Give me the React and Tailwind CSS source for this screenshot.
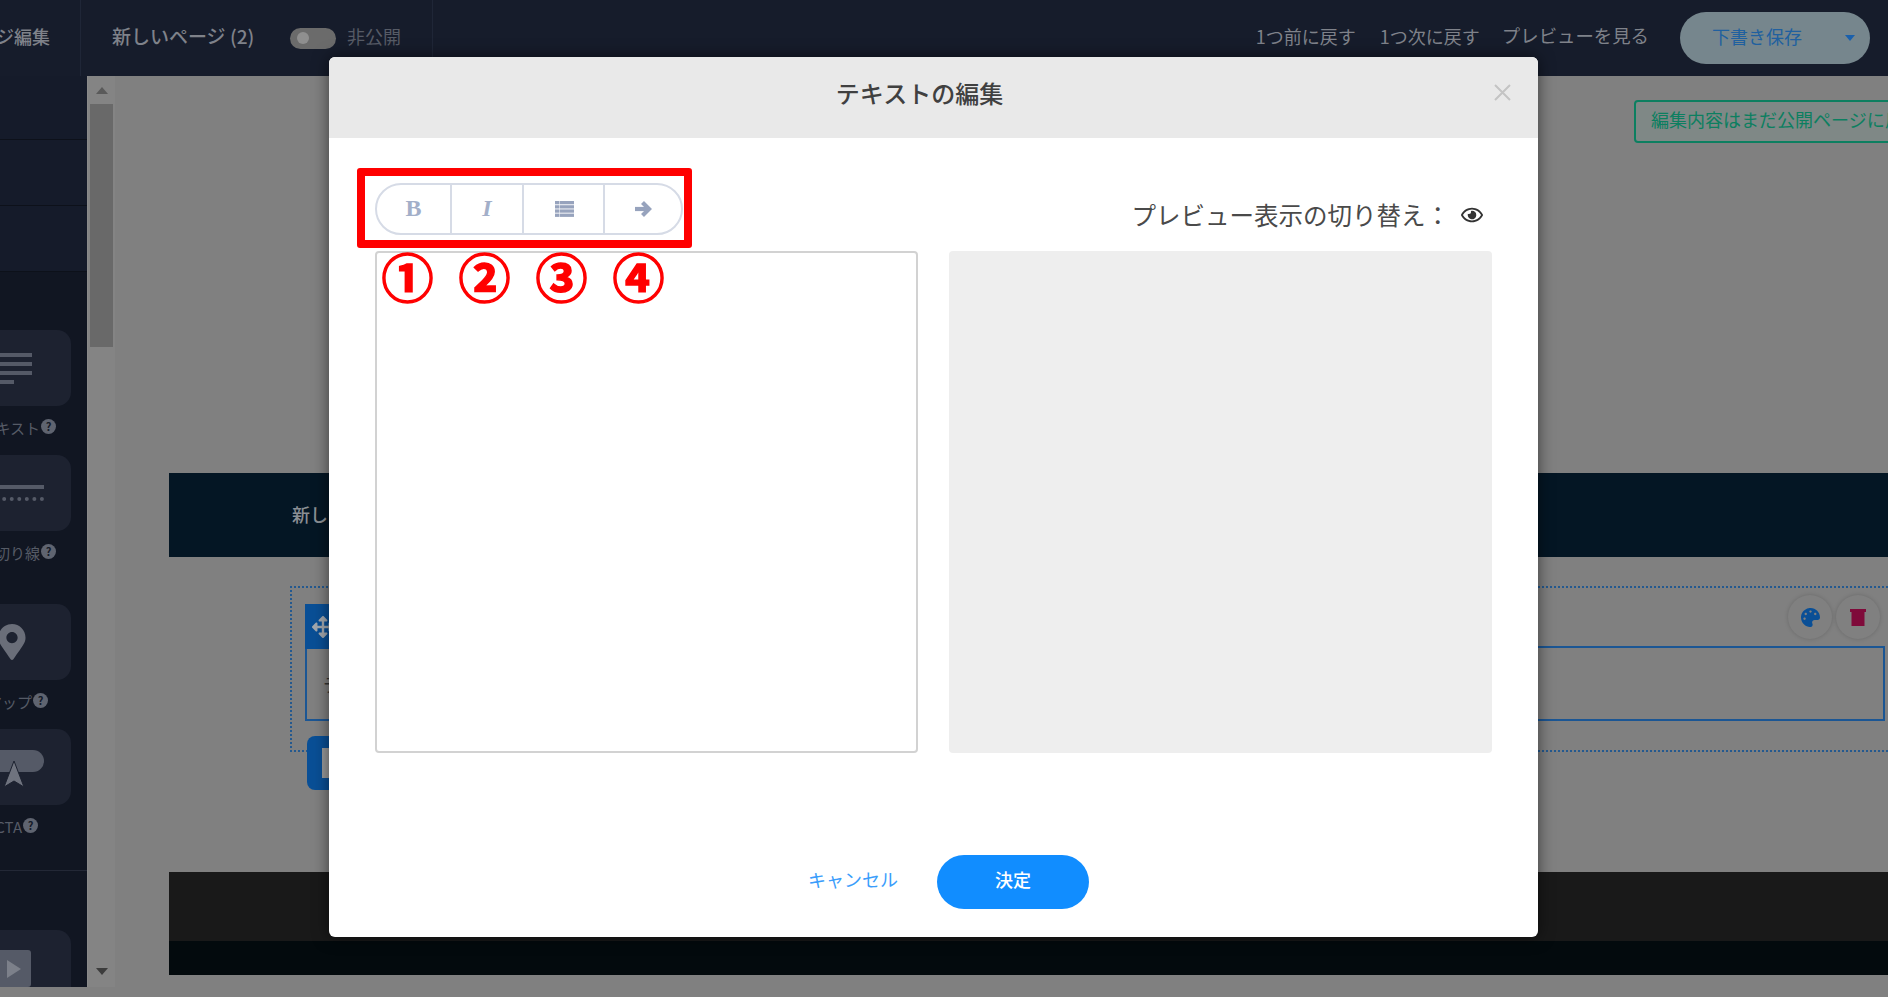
import React from "react";
import { FaArrowsAlt, FaRegEye, FaPalette, FaMapMarkerAlt } from "react-icons/fa";

function Help() {
  return (
    <span className="ml-[1px] flex h-[15px] w-[15px] shrink-0 items-center justify-center rounded-full bg-[#5f6470] text-[11px] font-bold leading-none text-[#141a28]">?</span>
  );
}

function Tool({ label, children, mb, labelPad = "pr-[15px]" }) {
  return (
    <div className={mb}>
      <div className="ml-[-29px] flex h-[76px] w-[100px] items-center justify-end overflow-hidden rounded-[14px] bg-[#1d2230]">{children}</div>
      <div className={`flex h-[49px] w-[71px] items-start justify-end overflow-hidden whitespace-nowrap pt-[13px] text-[15px] leading-[18px] text-[#565b66] ${labelPad}`}>
        <span>{label}</span>
        <Help />
      </div>
    </div>
  );
}

function ListIcon() {
  return (
    <svg className="ml-[2px]" width="19" height="16" viewBox="0 0 19 16" fill="#97a3bd">
      <rect x="0" y="0" width="4.5" height="3.3" /><rect x="5" y="0" width="14" height="3.3" />
      <rect x="0" y="4.2" width="4.5" height="3.3" /><rect x="5" y="4.2" width="14" height="3.3" />
      <rect x="0" y="8.4" width="4.5" height="3.3" /><rect x="5" y="8.4" width="14" height="3.3" />
      <rect x="0" y="12.6" width="4.5" height="3.3" /><rect x="5" y="12.6" width="14" height="3.3" />
    </svg>
  );
}

export default function App() {
  return (
    <div className="relative flex h-[997px] w-[1888px] flex-col overflow-hidden bg-[#808080] font-['Noto_Sans_CJK_JP','Noto_Sans',sans-serif]">
      {/* top bar */}
      <header className="flex h-[76px] shrink-0 items-center bg-[#161c2b] text-[18px] text-[#7f828a]">
        <div className="flex h-full w-[81px] items-center justify-end overflow-hidden whitespace-nowrap border-r border-[#1f2637] pb-[4px] pr-[30px] font-medium">
          ページ編集
        </div>
        <div className="flex h-full w-[352px] items-center border-r border-[#1f2637] pl-[31px]">
          <span className="w-[143px] whitespace-nowrap pb-[4px] text-[19px] font-medium">新しいページ (2)</span>
          <span className="ml-[35px] flex h-[21px] w-[46px] items-center rounded-full bg-[#6b6b6b] pl-[7px]">
            <span className="h-[12px] w-[12px] rounded-full bg-[#8f8f8f]" />
          </span>
          <span className="ml-[11px] pb-[4px] text-[#565b66]">非公開</span>
        </div>
        <div className="flex flex-1 items-center justify-end pr-[18px]">
          <span className="pb-[4px] text-[18px]">1つ前に戻す</span>
          <span className="ml-[24px] pb-[4px] text-[18px]">1つ次に戻す</span>
          <span className="ml-[22px] pb-[4px] text-[18.4px]">プレビューを見る</span>
          <div className="ml-[31px] flex h-[52px] w-[190px] items-center rounded-full bg-[#76868d] pl-[32px] text-[#20609f]">
            <span className="pb-[4px]">下書き保存</span>
            <span className="ml-[43px] h-0 w-0 border-x-[5px] border-t-[6px] border-x-transparent border-t-[#1a60ac]" />
          </div>
        </div>
      </header>

      <div className="flex h-[911px] shrink-0">
        {/* sidebar */}
        <aside className="flex w-[87px] shrink-0 flex-col overflow-hidden bg-[#111622]">
          <div className="h-[64px] border-b border-[#0d111a] bg-[#151b2a]" />
          <div className="h-[66px] border-b border-[#0d111a] bg-[#151b2a]" />
          <div className="h-[65px] bg-[#151b2a]" />
          <div className="h-[59px] border-t border-[#0d111a]" />
          <Tool label="テキスト">
            <div className="mr-[39px] flex flex-col gap-[5px]">
              <div className="h-[4px] w-[60px] bg-[#555a67]" />
              <div className="h-[4px] w-[60px] bg-[#555a67]" />
              <div className="h-[4px] w-[60px] bg-[#555a67]" />
              <div className="h-[4px] w-[42px] bg-[#555a67]" />
            </div>
          </Tool>
          <Tool label="区切り線" mb="mb-[24px]">
            <div className="mr-[27px] flex flex-col gap-[8px]">
              <div className="h-[4px] w-[72px] bg-[#555a67]" />
              <div className="h-[4px] w-[72px] border-t-4 border-dotted border-[#555a67]" />
            </div>
          </Tool>
          <Tool label="マップ" labelPad="pr-[23px]">
            <FaMapMarkerAlt className="mr-[41px] text-[#6a6e79]" size={36} />
          </Tool>
          <Tool label="CTA" mb="mb-[16px]" labelPad="pr-[33px]">
            <div className="relative mb-[12px] mr-[27px] h-[22px] w-[70px] rounded-full bg-[#555a67]">
              <svg className="absolute left-[30px] top-[11px]" width="20" height="26" viewBox="0 0 20 26" fill="#6f737e" stroke="#1d2230" strokeWidth="1">
                <path d="M10 0 L20 26 L10 20 L0 26 Z" />
              </svg>
            </div>
          </Tool>
          <div className="h-[60px] border-t border-[#232836]" />
          <div className="ml-[-29px] flex h-[57px] w-[100px] items-start justify-end overflow-hidden rounded-t-[14px] bg-[#1d2230] pr-[40px] pt-[20px]">
            <div className="flex h-[37px] w-[60px] items-center justify-end rounded-[3px] bg-[#555a67] pr-[10px]">
              <span className="h-0 w-0 border-y-[9px] border-l-[14px] border-y-transparent border-l-[#7c808a]" />
            </div>
          </div>
        </aside>

        {/* scrollbar */}
        <div className="flex w-[28px] shrink-0 flex-col items-center border-l border-[#8a8a8a] bg-[#848484]">
          <span className="mt-[11px] h-0 w-0 border-x-[6px] border-b-[7px] border-x-transparent border-b-[#5a5a5a]" />
          <div className="mt-[10px] h-[243px] w-[23px] bg-[#696969]" />
          <span className="mt-[621px] h-0 w-0 border-x-[6px] border-t-[7px] border-x-transparent border-t-[#3c3c3c]" />
        </div>

        {/* canvas */}
        <main className="flex min-w-0 flex-1 flex-col overflow-hidden pl-[54px] pt-[397px]">
          <div className="flex h-[84px] shrink-0 items-center bg-[#041624] pb-[2px] pl-[123px] text-[18px] font-medium text-[#8b8f94]">
            新しいページ
          </div>
          <div className="ml-[121px] mt-[29px] h-[166px] shrink-0 border-y-2 border-l-2 border-dotted border-[#24598f] pl-[13px] pt-[7px]">
            <div className="flex h-[54px] items-end justify-between pr-[8px]">
              <div className="flex h-[45px] w-[60px] items-center bg-[#094f96] pl-[7px] text-[#a3a8ae]">
                <FaArrowsAlt size={22} />
              </div>
              <div className="mb-[10px] flex gap-[4px]">
                <div className="flex h-[44px] w-[44px] items-center justify-center rounded-full bg-[#808080] shadow-[0_0_4px_rgba(0,0,0,0.18)]">
                  <FaPalette className="text-[#0a4f96]" size={19} />
                </div>
                <div className="flex h-[44px] w-[44px] items-center justify-center rounded-full bg-[#808080] shadow-[0_0_4px_rgba(0,0,0,0.18)]">
                  <svg width="16" height="17" viewBox="0 0 16 17" fill="#7f0a3a">
                    <path d="M0 0h16v3h-1.5v14h-13V3H0z" />
                  </svg>
                </div>
              </div>
            </div>
            <div className="mt-[-3px] mr-[3px] flex h-[75px] items-center border-2 border-[#1b5694] pl-[16px] text-[18px] leading-none text-[#333]">
              テキスト
            </div>
          </div>
          <div className="relative z-10 ml-[138px] mt-[-16px] flex h-[54px] w-[60px] shrink-0 items-center rounded-[8px] bg-[#094f96] pl-[15px]">
            <div className="h-[30px] w-[30px] bg-[#9a9a9a]" />
          </div>
          <div className="mt-[82px] h-[69px] shrink-0 bg-[#191919]" />
          <div className="h-[34px] shrink-0 bg-[#030a0d]" />
        </main>
      </div>

      {/* modal */}
      <div className="absolute left-[329px] top-[57px] z-20 flex h-[880px] w-[1209px] flex-col rounded-[6px] bg-white shadow-[0_0_16px_rgba(0,0,0,0.55)]">
        <div className="relative flex h-[81px] shrink-0 items-center justify-center rounded-t-[6px] bg-[#e9e9e9] pb-[9px] pr-[28px] text-[24px] font-medium text-[#404040]">
          テキストの編集
          <svg className="absolute right-[27px] top-[27px]" width="17" height="17" viewBox="0 0 17 17" stroke="#c4c4c4" strokeWidth="2">
            <path d="M1 1L16 16M16 1L1 16" />
          </svg>
        </div>

        <div className="flex items-end justify-between pl-[46px] pr-[55px] pt-[45px]">
          <div className="flex h-[52px] w-[308px] items-stretch rounded-full border-2 border-[#d6dbe6] text-[#a3afc9]">
            <div className="flex w-[75px] items-center justify-center border-r-2 border-[#d6dbe6] pb-[3px] font-['Liberation_Serif',serif] text-[24px] font-bold">B</div>
            <div className="flex w-[72px] items-center justify-center border-r-2 border-[#d6dbe6] pb-[3px] font-['Liberation_Serif',serif] text-[24px] font-bold italic">I</div>
            <div className="flex w-[81px] items-center justify-center border-r-2 border-[#d6dbe6] pb-[1px]"><ListIcon /></div>
            <div className="flex flex-1 items-center justify-center pb-[1px]">
              <svg width="18" height="16" viewBox="0 0 18 16" fill="none" stroke="#97a3bd" strokeWidth="4.2">
                <path d="M1 8H14" />
                <path d="M8.5 1.5L15 8L8.5 14.5" />
              </svg>
            </div>
          </div>
          <div className="flex items-center pb-[2px] text-[24.5px] leading-[36px] text-[#4a4a4a]">
            <span>プレビュー表示の切り替え：</span>
            <FaRegEye className="ml-[11px] text-[#333]" size={22} />
          </div>
        </div>

        <div className="mt-[16px] flex gap-[31px] pl-[46px] pr-[46px]">
          <div className="h-[502px] w-[543px] rounded-[4px] border-2 border-[#d2d2d2] bg-white" />
          <div className="h-[502px] flex-1 rounded-[4px] bg-[#eeeeee]" />
        </div>

        <div className="mt-[102px] flex items-center pl-[479px]">
          <span className="pb-[5px] text-[18px] text-[#3a9dfb]">キャンセル</span>
          <span className="ml-[39px] flex h-[54px] w-[152px] items-center justify-center rounded-full bg-[#118dff] pb-[5px] text-[18px] font-medium text-white">決定</span>
        </div>

        {/* annotations */}
        <div className="absolute left-[28px] top-[111px] h-[80px] w-[335px] rounded-[3px] border-[8px] border-[#ff0000]" />
        <div className="absolute left-[40px] top-[188px] flex text-[52px] font-bold leading-[62px] text-[#ff0000] [-webkit-text-stroke:1.5px_#ff0000]">
          <span className="w-[77px] text-center">①</span>
          <span className="w-[77px] text-center">②</span>
          <span className="w-[77px] text-center">③</span>
          <span className="w-[77px] text-center">④</span>
        </div>
      </div>

      {/* green notice */}
      <div className="absolute left-[1634px] top-[100px] flex h-[43px] w-[290px] items-center overflow-hidden whitespace-nowrap rounded-[4px] border-2 border-[#0c7f60] bg-[#7f8886] pb-[4px] pl-[15px] text-[18px] text-[#0c7f60]">
        編集内容はまだ公開ページに反映されていません
      </div>
    </div>
  );
}
